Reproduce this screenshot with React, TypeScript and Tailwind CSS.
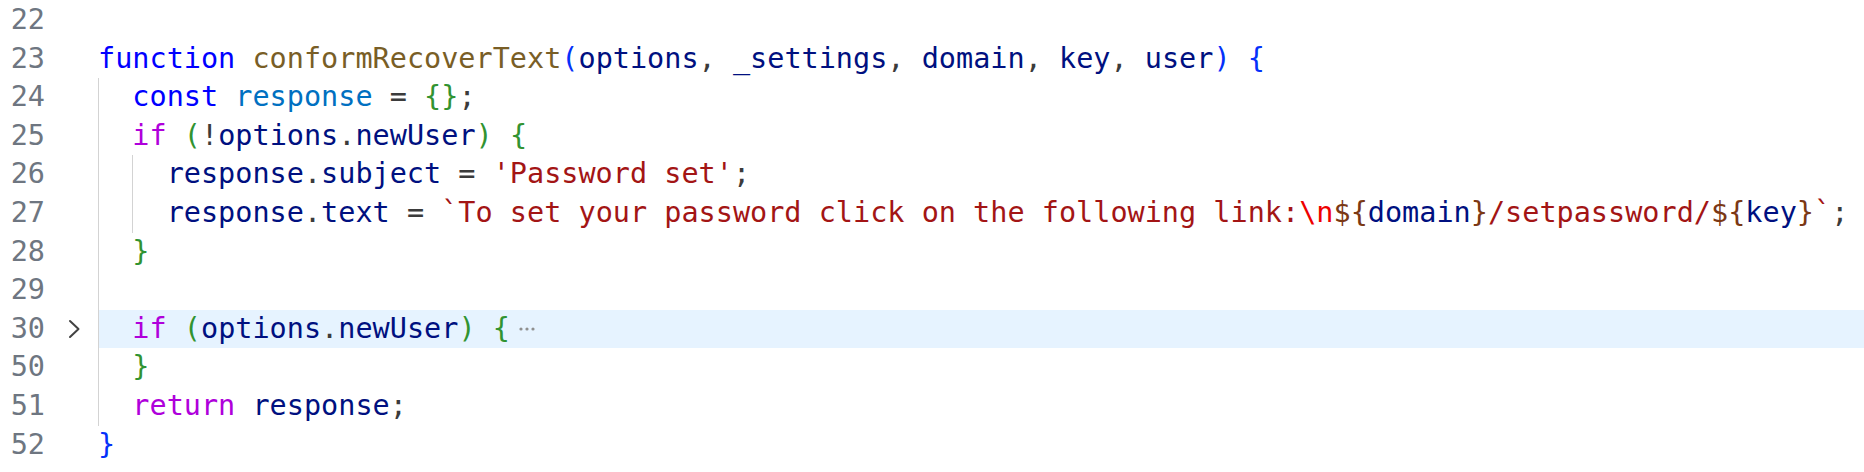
import React from "react";

type Tok = [string, string];

const K = "text-[#0000ff]";
const C = "text-[#af00db]";
const F = "text-[#795e26]";
const V = "text-[#001080]";
const D = "text-[#0070c1]";
const S = "text-[#a31515]";
const E = "text-[#ee0000]";
const P = "text-[#3b3b3b]";
const B1 = "text-[#0431fa]";
const B2 = "text-[#319331]";
const B3 = "text-[#7b3814]";

type Line = { n: number; guides: number; toks: Tok[]; folded?: boolean };

const lines: Line[] = [
  { n: 22, guides: 0, toks: [] },
  {
    n: 23,
    guides: 0,
    toks: [
      ["function", K], [" ", P], ["conformRecoverText", F], ["(", B1],
      ["options", V], [", ", P], ["_settings", V], [", ", P], ["domain", V],
      [", ", P], ["key", V], [", ", P], ["user", V], [")", B1], [" ", P], ["{", B1],
    ],
  },
  {
    n: 24,
    guides: 1,
    toks: [["const", K], [" ", P], ["response", D], [" = ", P], ["{}", B2], [";", P]],
  },
  {
    n: 25,
    guides: 1,
    toks: [
      ["if", C], [" ", P], ["(", B2], ["!", P], ["options", V], [".", P],
      ["newUser", V], [")", B2], [" ", P], ["{", B2],
    ],
  },
  {
    n: 26,
    guides: 2,
    toks: [["response", V], [".", P], ["subject", V], [" = ", P], ["'Password set'", S], [";", P]],
  },
  {
    n: 27,
    guides: 2,
    toks: [
      ["response", V], [".", P], ["text", V], [" = ", P],
      ["`To set your password click on the following link:", S], ["\\n", E],
      ["${", B3], ["domain", V], ["}", B3], ["/setpassword/", S], ["${", B3],
      ["key", V], ["}", B3], ["`", S], [";", P],
    ],
  },
  { n: 28, guides: 1, toks: [["}", B2]] },
  { n: 29, guides: 1, toks: [] },
  {
    n: 30,
    guides: 1,
    folded: true,
    toks: [
      ["if", C], [" ", P], ["(", B2], ["options", V], [".", P], ["newUser", V],
      [")", B2], [" ", P], ["{", B2],
    ],
  },
  { n: 50, guides: 1, toks: [["}", B2]] },
  { n: 51, guides: 1, toks: [["return", C], [" ", P], ["response", V], [";", P]] },
  { n: 52, guides: 0, toks: [["}", B1]] },
];

const Chevron = () => (
  <svg width="14" height="20" viewBox="0 0 14 20" fill="none" className="ml-[22px]">
    <path d="M3 2 L11.5 10 L3 18" stroke="#424242" strokeWidth="2" strokeLinecap="round" strokeLinejoin="round" />
  </svg>
);

const FoldDots = () => (
  <svg width="18" height="8" viewBox="0 0 18 8" className="ml-[8px] self-center">
    <circle cx="3" cy="4" r="1.6" fill="#8f8f8f" />
    <circle cx="9" cy="4" r="1.6" fill="#8f8f8f" />
    <circle cx="15" cy="4" r="1.6" fill="#8f8f8f" />
  </svg>
);

export default function App() {
  return (
    <div
      className="w-[1864px] h-[472px] bg-white overflow-hidden pt-[1px] text-[28.5px] leading-[38.6px]"
      style={{ fontFamily: '"DejaVu Sans Mono", "Liberation Mono", monospace' }}
    >
      {lines.map((line) => (
        <div key={line.n} className="flex h-[38.6px]">
          <div className="w-[45px] shrink-0 text-right text-[#6e7681]">{line.n}</div>
          <div className="w-[53px] shrink-0 flex items-center">{line.folded && <Chevron />}</div>
          <div className={`flex-1 flex items-stretch whitespace-pre ${line.folded ? "bg-[#e6f3ff]" : ""}`}>
            {line.guides >= 1 && <span className="w-[2ch] shrink-0 border-l border-[#d3d3d3]" />}
            {line.guides >= 2 && <span className="w-[2ch] shrink-0 border-l border-[#d3d3d3]" />}
            <span>
              {line.toks.map(([t, c], i) => (
                <span key={i} className={c}>
                  {t}
                </span>
              ))}
            </span>
            {line.folded && <FoldDots />}
          </div>
        </div>
      ))}
    </div>
  );
}
